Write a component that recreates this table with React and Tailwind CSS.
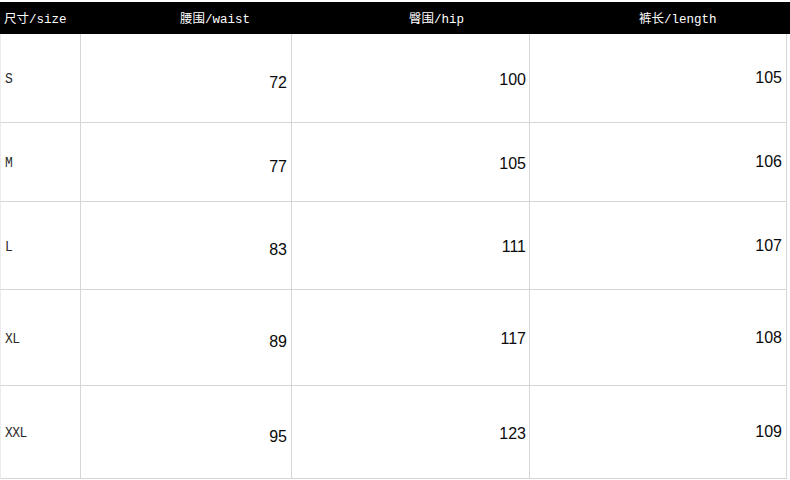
const headers = [
  { label: '尺寸/size', cls: 'pl-[4px]' },
  { label: '腰围/waist', cls: '' },
  { label: '臀围/hip', cls: '' },
  { label: '裤长/length', cls: '' },
];

const rows = [
  { size: 'S', waist: 72, hip: 100, length: 105 },
  { size: 'M', waist: 77, hip: 105, length: 106 },
  { size: 'L', waist: 83, hip: 111, length: 107 },
  { size: 'XL', waist: 89, hip: 117, length: 108 },
  { size: 'XXL', waist: 95, hip: 123, length: 109 },
];

const mono = "font-['Liberation_Mono','Noto_Sans_CJK_SC',monospace]";
const sans = "font-['Liberation_Sans',Arial,sans-serif]";

export default function App() {
  return (
    <div className="w-[790px] h-[480px] bg-white pt-[2px] overflow-hidden">
      {/* Header bar */}
      <div className={`h-[32px] bg-black text-white text-[12.5px] grid grid-cols-[180px_229px_230px_1fr] items-center pt-[4px] ${mono}`}>
        {headers.map((h) => (
          <div key={h.label} className={`whitespace-nowrap ${h.cls}`}>
            {h.label}
          </div>
        ))}
      </div>

      {/* Body */}
      <div className="w-[787px] grid grid-cols-[81px_211px_238px_257px] grid-rows-[89px_79px_88px_96px_93px]">
        {rows.map((r) => (
          <div key={r.size} className="contents">
            <div className={`border-r border-b border-l border-r-[#d6d6d6] border-b-[#d6d6d6] border-l-[#ececec] flex items-center pl-[4px] pt-[4px] text-[13px] text-[#2a2a2a] ${mono}`}>
              <span className="inline-block tracking-[-0.5px] scale-y-110">{r.size}</span>
            </div>
            <div className={`border-r border-b border-[#d6d6d6] flex items-center justify-end pr-[4px] pt-[9px] text-[16px] text-[#0a0a0a] ${sans}`}>
              {r.waist}
            </div>
            <div className={`border-r border-b border-[#d6d6d6] flex items-center justify-end pr-[3px] pt-[3px] text-[16px] text-[#0a0a0a] ${sans}`}>
              {r.hip}
            </div>
            <div className={`border-r border-b border-[#d6d6d6] flex items-center justify-end pr-[4px] text-[16px] text-[#0a0a0a] ${sans}`}>
              {r.length}
            </div>
          </div>
        ))}
      </div>
    </div>
  );
}
